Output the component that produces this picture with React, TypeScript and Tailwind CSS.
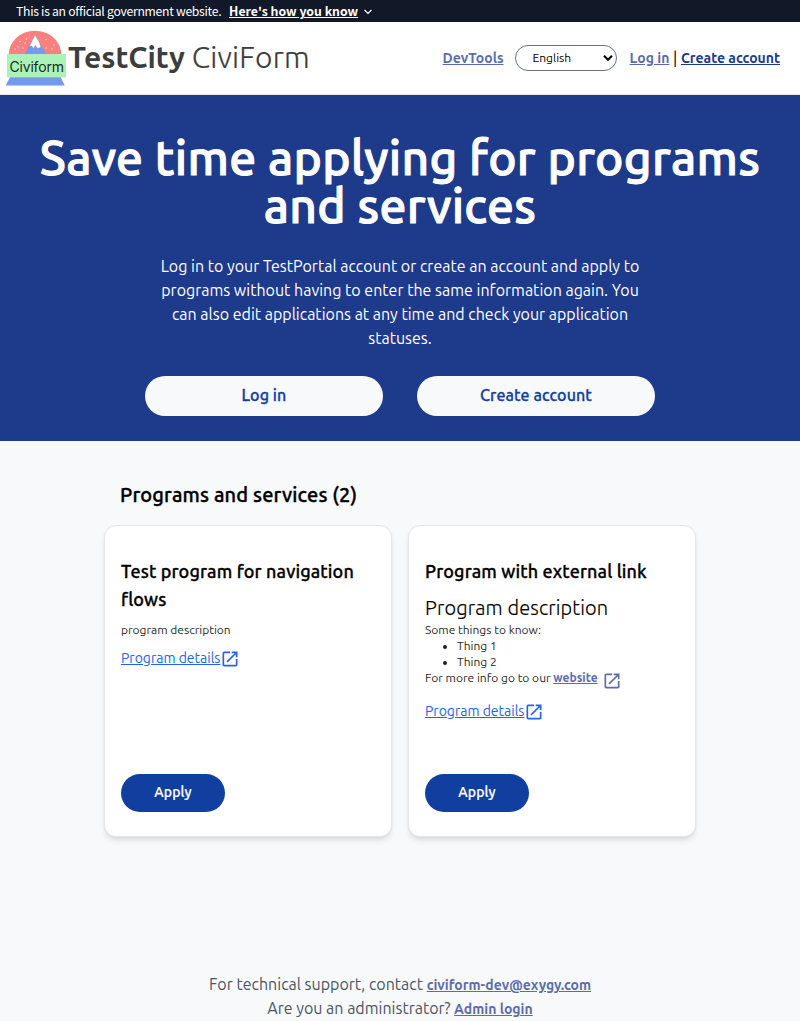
import type { ReactNode } from "react";

function OpenIcon({ className = "" }: { className?: string }) {
  return (
    <svg viewBox="0 0 24 24" fill="currentColor" className={`h-5 w-5 shrink-0 ${className}`} aria-hidden="true">
      <path d="M19 19H5V5h7V3H5a2 2 0 0 0-2 2v14a2 2 0 0 0 2 2h14c1.1 0 2-.9 2-2v-7h-2v7zM14 3v2h3.59l-9.83 9.83 1.41 1.41L19 6.41V10h2V3h-7z" />
    </svg>
  );
}

function Logo() {
  return (
    <svg viewBox="0 0 68 72" className="h-[72px] w-[68px] shrink-0" role="img">
      <path d="M8.700 32.500 A26.300 23.800 0 0 1 61.300 32.500 Z" fill="#fa8080" />
      <path d="M24.300 32.500 L35 13 L46.500 32.500 Z" fill="#7399f0" />
      <path d="M35 12.800 L29.300 24.500 L31.700 24 L33.300 26.500 L35.500 23.500 L37.500 26.500 L41 25.300 L39.500 20.500 Z" fill="#fff" stroke="#8b8b99" strokeWidth="0.5" />
      <g fill="#ffd0d0">
        <circle cx="26.500" cy="17" r="0.800" />
        <circle cx="20" cy="19.500" r="0.800" />
        <circle cx="25" cy="21" r="0.800" />
        <circle cx="18" cy="25" r="0.800" />
        <circle cx="23" cy="26" r="0.800" />
        <circle cx="15" cy="27" r="0.800" />
        <circle cx="46" cy="17.500" r="0.800" />
        <circle cx="54" cy="23" r="0.800" />
        <circle cx="46" cy="26" r="0.800" />
        <circle cx="52" cy="27" r="0.800" />
      </g>
      <rect x="7" y="32" width="59" height="23.300" fill="#aaf2b8" />
      <path d="M10 55.300 L60.700 55.300 L64.700 63.500 L5.700 63.500 Z" fill="#7399f0" />
      <text x="9.500" y="49.800" fontFamily="Inter, Roboto, sans-serif" fontSize="14" textLength="54.500" fill="#1c2b20">
        Civiform
      </text>
    </svg>
  );
}

function TextLink({ children, className = "" }: { children: ReactNode; className?: string }) {
  return (
    <a href="#" className={`font-bold underline ${className}`}>
      {children}
    </a>
  );
}

function Details() {
  return (
    <a href="#" className="flex h-5 items-center text-sm text-[#2563eb]">
      <span className="pt-px underline">Program details</span>
      <OpenIcon className="mt-[3px]" />
    </a>
  );
}

function Card({ title, children }: { title: string; children: ReactNode }) {
  return (
    <li className="flex h-[312px] w-72 flex-col rounded-xl border border-[#e5e7eb] bg-white px-4 pt-[31px] pb-6 shadow-md">
      <h3 className="text-lg leading-7 font-medium tracking-[0.12px] text-black [-webkit-text-stroke:0.3px]">{title}</h3>
      <div className="mt-[9px] flex grow flex-col items-start text-xs text-[#1f1f1f]">{children}</div>
      <button className="h-[38px] w-[104px] rounded-[19px] bg-[#113f9f] pb-0.5 text-sm font-medium tracking-[0.15px] text-white [-webkit-text-stroke:0.2px]">Apply</button>
    </li>
  );
}

export default function App() {
  return (
    <div className="flex h-[1021px] w-[800px] flex-col overflow-hidden bg-[#f8f9fb] font-['Ubuntu','Noto_Sans',sans-serif]">
      <div className="flex h-[22px] shrink-0 items-center bg-[#111827] pl-4 font-['Noto_Sans_CJK_JP',sans-serif] text-[12.2px] leading-4 text-white">
        <span className="tracking-[-0.28px]">This is an official government website.</span>
        <span className="ml-[7.8px] text-[12.3px] font-bold underline">Here's how you know</span>
        <svg viewBox="0 0 10 10" className="mt-0.5 ml-[5px] h-2.5 w-2.5" fill="none" stroke="#fff" strokeWidth="1.200">
          <path d="M1.500 3 L5 6.500 L8.500 3" />
        </svg>
      </div>

      <header className="flex h-[73px] shrink-0 items-center border-b border-[#e5e7eb] bg-white pr-5">
        <Logo />
        <div className="pb-0.5 text-3xl text-[#3d3d3d]">
          <span className="font-bold">TestCity</span> <span className="font-light tracking-[0.22px] [-webkit-text-stroke:0.2px]">CiviForm</span>
        </div>
        <nav className="ml-auto flex items-center text-sm text-black">
          <TextLink className="text-[#5a6cae]">DevTools</TextLink>
          <div className="mr-[12.6px] ml-[11.5px] flex h-[26px] w-[102px] items-center justify-between rounded-full border border-[#6b7280] pr-[3px] pl-[16.5px]">
            <span className="text-xs">English</span>
            <svg viewBox="0 0 10 8" className="h-2 w-2.5" fill="none" stroke="#000" strokeWidth="2">
              <path d="M1 1.800 L5 5.800 L9 1.800" />
            </svg>
          </div>
          <TextLink className="text-[#5a6cae]">Log in</TextLink>
          <span className="mx-[3.6px] text-base">|</span>
          <TextLink className="text-[#1e3a8a]">Create account</TextLink>
        </nav>
      </header>

      <section className="flex h-[346px] shrink-0 flex-col items-center bg-[#1e3a8a] pt-[38px] text-center text-white">
        <h1 className="text-5xl leading-none font-medium tracking-[0.29px] [-webkit-text-stroke:1px]">
          Save time applying for programs
          <br />
          and services
        </h1>
        <p className="mt-[25px] w-[480px] text-base whitespace-nowrap">
          Log in to your TestPortal account or create an account and apply to
          <br />
          programs without having to enter the same information again. You
          <br />
          can also edit applications at any time and check your application
          <br />
          statuses.
        </p>
        <div className="mt-[26px] flex gap-[34px] text-base font-medium tracking-[0.1px] text-[#113f9f] [-webkit-text-stroke:0.3px]">
          <button className="h-10 w-[238px] rounded-full bg-[#f8f9fb] pb-0.5">Log in</button>
          <button className="h-10 w-[238px] rounded-full bg-[#f8f9fb] pb-0.5">Create account</button>
        </div>
      </section>

      <main className="px-[104px] pt-10">
        <h2 className="pl-4 text-xl leading-7 font-medium tracking-[0.13px] text-black [-webkit-text-stroke:0.35px]">Programs and services (2)</h2>
        <ul className="mt-4 flex gap-4">
          <Card title="Test program for navigation flows">
            <p className="mb-[9px]">program description</p>
            <Details />
          </Card>
          <Card title="Program with external link">
            <h4 className="text-xl leading-7 font-light tracking-[0.13px] text-black [-webkit-text-stroke:0.15px]">Program description</h4>
            <p>Some things to know:</p>
            <ul className="list-disc pl-8">
              <li>Thing 1</li>
              <li>Thing 2</li>
            </ul>
            <p className="flex h-4 items-center">
              For more info go to our&nbsp;
              <TextLink className="text-[#5a6cae]">website</TextLink>
              <OpenIcon className="mt-1.5 ml-1 text-[#5a6cae]" />
            </p>
            <div className="mt-3.5">
              <Details />
            </div>
          </Card>
        </ul>
      </main>

      <footer className="mt-auto pb-px text-center text-base text-[#4b5563]">
        <p>
          For technical support, contact <TextLink className="text-sm text-[#5a6cae]">civiform-dev@exygy.com</TextLink>
        </p>
        <p>
          Are you an administrator? <TextLink className="text-sm text-[#5a6cae]">Admin login</TextLink>
        </p>
      </footer>
    </div>
  );
}
